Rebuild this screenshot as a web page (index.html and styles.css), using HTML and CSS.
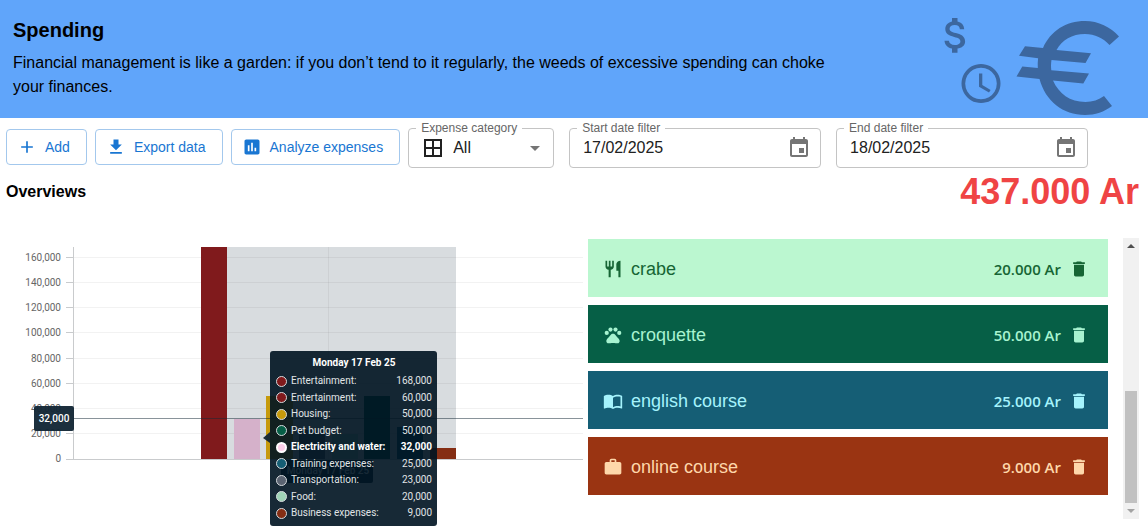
FILE: index.html
```html
<!DOCTYPE html>
<html lang="en">
<head>
<meta charset="utf-8">
<meta name="viewport" content="width=device-width, initial-scale=1">
<title>Spending</title>
<link rel="stylesheet" href="styles.css">
</head>
<body>
<header class="banner">
  <div class="banner-text">
    <h1>Spending</h1>
    <p>Financial management is like a garden: if you don’t tend to it regularly, the weeds of excessive spending can choke your finances.</p>
  </div>
  <svg class="banner-art" viewBox="0 0 188 118" aria-hidden="true">
    <g fill="#3c679f">
      <path d="M0 0h5.500v3.500c4 .8 6.500 3.500 6.700 7.700h-4.300c-.2-2.600-1.900-4.200-5.100-4.200-3.300 0-5.200 1.400-5.200 3.700 0 2.200 1.600 3.200 6.200 4.300 4.700 1.200 9.300 3 9.300 8.400 0 4.200-3.400 6.400-7.600 7.200v4.200H0v-4.200c-3.900-.8-7.300-3.300-7.500-7.800h4.400c.3 2.500 2.300 4.300 6 4.300 4.200 0 5.500-1.900 5.500-3.500 0-2.400-1.400-3.600-6.200-4.700-5.400-1.300-8.900-3.400-8.900-7.900 0-3.900 3-6.600 6.700-7.400z" transform="translate(-8 18)"/>
      <path fill-rule="evenodd" d="M21 64a19.500 19.500 0 1 0 .01 0zM21 67.700a15.800 15.800 0 1 1-.01 0zM19 73.500v13.200l10 5.800 1.600-2.600-8.300-5v-11.400z"/>
      <path fill-rule="evenodd" d="M159 36.500 149.500 45C143 38 135 34 125 34c-13 0-23 6-28.500 16.100L131 53.200l-5.500 9.700L91.500 60c-.6 3.400-.6 7-.2 10.300l37.700 3.100-5.700 10-30.300-2.900C98.700 93.500 110 102 125.500 102c7 0 13.300-2.100 18.500-6l8 10c-7.500 5.800-17 9-27 9-22 0-39.600-14-45.500-36l-23-2.400 5.800-10 15.500 1.300c-.2-3.200-.1-6.400.3-9.600L59 55.700l6-9.400 18 1.600C90.500 31 106 21 125 21c13.500 0 25.500 6 34 15.500z"/>
    </g>
  </svg>
</header>

<main>
  <div class="toolbar">
    <div class="actions">
      <button class="action" type="button">
        <svg class="icon-20" viewBox="0 0 24 24"><path d="M19 13h-6v6h-2v-6H5v-2h6V5h2v6h6z"/></svg>Add
      </button>
      <button class="action" type="button">
        <svg class="icon-20" viewBox="0 0 24 24"><path d="M19 9h-4V3H9v6H5l7 7zM5 18v2h14v-2z"/></svg>Export data
      </button>
      <button class="action" type="button">
        <svg class="icon-20" viewBox="0 0 24 24"><path d="M19 3H5c-1.100 0-2 .9-2 2v14c0 1.100.9 2 2 2h14c1.100 0 2-.9 2-2V5c0-1.100-.9-2-2-2M9 17H7v-7h2zm4 0h-2V7h2zm4 0h-2v-4h2z"/></svg>Analyze expenses
      </button>
    </div>
    <div class="field field-select">
      <label for="category">Expense category</label>
      <svg class="icon-24 dark" viewBox="0 0 24 24"><path d="M3 3v18h18V3zm8 16H5v-6h6zm0-8H5V5h6zm8 8h-6v-6h6zm0-8h-6V5h6z"/></svg>
      <select id="category"><option>All</option></select>
      <svg class="icon-24 gray" viewBox="0 0 24 24"><path d="m7 10 5 5 5-5z"/></svg>
    </div>
    <div class="field field-date">
      <label for="start">Start date filter</label>
      <input id="start" type="text" value="17/02/2025">
      <button type="button" aria-label="Choose start date"><svg class="icon-24 gray" viewBox="0 0 24 24"><path d="M17 12h-5v5h5zM16 1v2H8V1H6v2H5c-1.110 0-1.990.9-1.990 2L3 19c0 1.100.89 2 2 2h14c1.100 0 2-.9 2-2V5c0-1.100-.9-2-2-2h-1V1zm3 18H5V8h14z"/></svg></button>
    </div>
    <div class="field field-date">
      <label for="end">End date filter</label>
      <input id="end" type="text" value="18/02/2025">
      <button type="button" aria-label="Choose end date"><svg class="icon-24 gray" viewBox="0 0 24 24"><path d="M17 12h-5v5h5zM16 1v2H8V1H6v2H5c-1.110 0-1.990.9-1.990 2L3 19c0 1.100.89 2 2 2h14c1.100 0 2-.9 2-2V5c0-1.100-.9-2-2-2h-1V1zm3 18H5V8h14z"/></svg></button>
    </div>
  </div>

  <div class="summary">
    <h2>Overviews</h2>
    <strong class="total">437.000 Ar</strong>
  </div>

  <div class="content">
    <section class="chart" aria-label="Spending by day">
      <svg class="plot" viewBox="0 0 583 250">
        <rect x="201" y="9" width="255" height="212" fill="#d8dcdf"/>
        <g class="grid">
          <path d="M73 19.500H583M73 44.500H583M73 69.500H583M73 94.500H583M73 120.500H583M73 145.500H583M73 170.500H583M73 195.500H583M328.500 9V221"/>
        </g>
        <path class="axis" d="M73.500 9V221M66 221.500H583M66 19.500h7M66 44.500h7M66 69.500h7M66 94.500h7M66 120.500h7M66 145.500h7M66 170.500h7M66 195.500h7"/>
        <g class="ticks">
          <text x="61" y="23">160,000</text>
          <text x="61" y="48">140,000</text>
          <text x="61" y="73">120,000</text>
          <text x="61" y="98">100,000</text>
          <text x="61" y="124">80,000</text>
          <text x="61" y="149">60,000</text>
          <text x="61" y="174">40,000</text>
          <text x="61" y="199">20,000</text>
          <text x="61" y="224">0</text>
        </g>
        <rect x="201" y="9" width="26" height="212" fill="#801a1c"/>
        <rect x="234" y="181" width="26" height="40" fill="#d5b1ca"/>
        <rect x="266" y="158" width="27" height="63" fill="#c69a0c"/>
        <rect x="299" y="192" width="26" height="29" fill="#5b6472"/>
        <rect x="332" y="196" width="26" height="25" fill="#9fd3b6"/>
        <rect x="364" y="158" width="26" height="63" fill="#065f46"/>
        <rect x="397" y="189" width="26" height="32" fill="#155e75"/>
        <rect x="430" y="210" width="26" height="11" fill="#852e14"/>
        <path d="M73 180.500H583" stroke="#132735" stroke-opacity=".5"/>
        <rect class="tag" x="34" y="168" width="40" height="25" rx="2"/>
        <text class="tag-text" x="54" y="184">32,000</text>
        <rect class="tag" x="281" y="222" width="92" height="23" rx="2"/>
        <text class="tag-text" x="328" y="236">Monday 17 Feb 25</text>
        <path class="tag" d="M263 200 270 194v11z"/>
      </svg>
      <div class="tooltip">
        <h3>Monday 17 Feb 25</h3>
        <ul>
          <li><i class="dot c-entertainment"></i>Entertainment:<span>168,000</span></li>
          <li><i class="dot c-entertainment"></i>Entertainment:<span>60,000</span></li>
          <li><i class="dot c-housing"></i>Housing:<span>50,000</span></li>
          <li><i class="dot c-pet"></i>Pet budget:<span>50,000</span></li>
          <li class="active"><i class="dot c-electricity"></i>Electricity and water:<span>32,000</span></li>
          <li><i class="dot c-training"></i>Training expenses:<span>25,000</span></li>
          <li><i class="dot c-transport"></i>Transportation:<span>23,000</span></li>
          <li><i class="dot c-food"></i>Food:<span>20,000</span></li>
          <li><i class="dot c-business"></i>Business expenses:<span>9,000</span></li>
        </ul>
      </div>
    </section>

    <section class="list-pane" aria-label="Expenses">
      <ul class="expenses">
        <li class="expense food">
          <svg class="icon-20" viewBox="0 0 24 24"><path d="M11 9H9V2H7v7H5V2H3v7c0 2.120 1.660 3.840 3.750 3.970V22h2.500v-9.030C11.340 12.840 13 11.120 13 9V2h-2zm5-3v8h2.500v8H21V2c-2.760 0-5 2.240-5 4"/></svg>
          <span class="name">crabe</span><span class="amount">20.000 Ar</span>
          <button type="button" aria-label="Delete crabe"><svg class="icon-20" viewBox="0 0 24 24"><path d="M6 19c0 1.100.9 2 2 2h8c1.100 0 2-.9 2-2V7H6zM19 4h-3.500l-1-1h-5l-1 1H5v2h14z"/></svg></button>
        </li>
        <li class="expense pet">
          <svg class="icon-20" viewBox="0 0 24 24"><circle cx="4.500" cy="9.500" r="2.500"/><circle cx="9" cy="5.500" r="2.500"/><circle cx="15" cy="5.500" r="2.500"/><circle cx="19.500" cy="9.500" r="2.500"/><path d="M17.340 14.860c-.87-1.020-1.600-1.890-2.480-2.910-.46-.54-1.050-1.080-1.750-1.320-.11-.04-.22-.07-.33-.09-.25-.04-.52-.04-.78-.04s-.53 0-.79.050c-.11.020-.22.050-.33.090-.7.240-1.280.78-1.750 1.320-.87 1.020-1.600 1.890-2.480 2.910-1.310 1.310-2.920 2.760-2.620 4.790.29 1.020 1.020 2.030 2.330 2.320.73.150 3.060-.44 5.540-.44h.18c2.480 0 4.810.58 5.540.44 1.310-.29 2.040-1.310 2.330-2.320.31-2.040-1.300-3.490-2.610-4.800"/></svg>
          <span class="name">croquette</span><span class="amount">50.000 Ar</span>
          <button type="button" aria-label="Delete croquette"><svg class="icon-20" viewBox="0 0 24 24"><path d="M6 19c0 1.100.9 2 2 2h8c1.100 0 2-.9 2-2V7H6zM19 4h-3.500l-1-1h-5l-1 1H5v2h14z"/></svg></button>
        </li>
        <li class="expense training">
          <svg class="icon-20" viewBox="0 0 24 24"><path d="M21 5c-1.110-.35-2.330-.5-3.500-.5-1.950 0-4.050.4-5.500 1.500-1.450-1.100-3.550-1.500-5.500-1.500S2.450 4.900 1 6v14.650c0 .25.250.5.500.5.100 0 .15-.05.250-.05C3.100 20.450 5.050 20 6.500 20c1.950 0 4.050.4 5.500 1.500 1.350-.85 3.800-1.500 5.500-1.500 1.650 0 3.350.3 4.750 1.050.1.050.15.050.250.050.250 0 .5-.25.500-.5V6c-.6-.45-1.250-.75-2-1m0 13.500c-1.100-.35-2.300-.5-3.500-.5-1.700 0-4.150.65-5.500 1.500V8c1.350-.85 3.800-1.500 5.500-1.500 1.200 0 2.400.150 3.500.5z"/></svg>
          <span class="name">english course</span><span class="amount">25.000 Ar</span>
          <button type="button" aria-label="Delete english course"><svg class="icon-20" viewBox="0 0 24 24"><path d="M6 19c0 1.100.9 2 2 2h8c1.100 0 2-.9 2-2V7H6zM19 4h-3.500l-1-1h-5l-1 1H5v2h14z"/></svg></button>
        </li>
        <li class="expense business">
          <svg class="icon-20" viewBox="0 0 24 24"><path d="M20 6h-4V4c0-1.110-.89-2-2-2h-4c-1.110 0-2 .89-2 2v2H4c-1.110 0-1.990.89-1.990 2L2 19c0 1.110.89 2 2 2h16c1.110 0 2-.89 2-2V8c0-1.110-.89-2-2-2m-6 0h-4V4h4z"/></svg>
          <span class="name">online course</span><span class="amount">9.000 Ar</span>
          <button type="button" aria-label="Delete online course"><svg class="icon-20" viewBox="0 0 24 24"><path d="M6 19c0 1.100.9 2 2 2h8c1.100 0 2-.9 2-2V7H6zM19 4h-3.500l-1-1h-5l-1 1H5v2h14z"/></svg></button>
        </li>
      </ul>
      <div class="scrollbar" aria-hidden="true">
        <span class="arrow up"></span>
        <span class="thumb"></span>
        <span class="arrow down"></span>
      </div>
    </section>
  </div>
</main>
</body>
</html>
```

FILE: styles.css
```css
* { box-sizing: border-box; }

body {
  margin: 0;
  background: #fff;
  color: #000;
  font: 16px/24px "Liberation Sans", Arial, sans-serif;
}
main { padding-bottom: 12px; }

h1, h2, h3, p, ul { margin: 0; padding: 0; }
ul { list-style: none; }
button { font: inherit; cursor: pointer; }
svg { display: block; flex: none; fill: currentColor; }

.icon-20 { width: 20px; height: 20px; }
.icon-24 { width: 24px; height: 24px; }
.dark { color: #212121; }
.gray { color: #757575; }

/* Banner */
.banner {
  display: flex;
  justify-content: space-between;
  height: 118px;
  background: #60a5fa;
}
.banner-text { max-width: 848px; padding: 16px 13px; }
.banner h1 { font-size: 20px; line-height: 28px; margin-bottom: 7px; }
.banner-art { width: 188px; height: 118px; overflow: visible; }

/* Toolbar */
.toolbar {
  display: flex;
  align-items: flex-start;
  gap: 15px;
  padding: 10px 60px 0 6px;
}
.actions { display: flex; gap: 8px; margin-right: -7px; padding-top: 1px; }
.action {
  display: flex;
  align-items: center;
  gap: 8px;
  height: 36px;
  padding: 0 16px 0 10px;
  border: 1px solid #a3c8ed;
  border-radius: 4px;
  background: #fff;
  color: #1976d2;
  font-size: 14px;
  white-space: nowrap;
}
.field {
  position: relative;
  display: flex;
  align-items: center;
  min-width: 0;
  height: 40px;
  border: 1px solid #c4c4c4;
  border-radius: 4px;
}
.field label {
  position: absolute;
  top: -9px;
  left: 7px;
  padding: 0 5px;
  background: #fff;
  color: #666;
  font-size: 12px;
  line-height: 16px;
  white-space: nowrap;
}
.field-select { flex: 0 0 146px; padding: 0 6px 0 12px; }
.field-date { flex: 0 1 252px; padding: 0 9px 0 13px; }
.field select, .field input {
  flex: 1;
  width: 100%;
  min-width: 0;
  padding: 0;
  border: 0;
  outline: 0;
  background: none;
  color: #212121;
  font: inherit;
  appearance: none;
}
.field select { padding-left: 8px; }
.field button { padding: 0; border: 0; background: none; }

/* Summary */
.summary {
  display: flex;
  justify-content: space-between;
  align-items: center;
  padding: 4px 9px 26px 6px;
}
.summary h2 { font-size: 16px; line-height: 24px; }
.total { color: #ef4444; font-size: 36px; line-height: 40px; }

/* Chart */
.content {
  display: grid;
  grid-template-columns: minmax(0, 583fr) minmax(0, 551fr);
  gap: 5px;
  padding-right: 9px;
}
.chart { position: relative; font-family: Roboto, sans-serif; font-size: 10px; }
.plot { width: 100%; }
.grid path { fill: none; stroke: #000; stroke-opacity: .05; }
.axis { fill: none; stroke: #c9cbcd; }
.ticks { fill: #666; text-anchor: end; }
.tag { fill: #132735; fill-opacity: .96; }
.tag-text { fill: #fff; font-weight: 500; text-anchor: middle; }
.tooltip {
  position: absolute;
  top: 113px;
  left: 270px;
  display: flex;
  flex-direction: column;
  width: 167px;
  height: 175px;
  padding: 4px 5px 5px 6px;
  border-radius: 3px;
  background: rgba(0, 20, 34, .91);
  color: #e0e4e6;
  line-height: 16px;
}
.tooltip h3 { color: #fff; font-size: 10px; text-align: center; margin-bottom: 2px; }
.tooltip ul { flex: 1; display: flex; flex-direction: column; justify-content: space-between; }
.tooltip li { display: flex; align-items: center; gap: 4px; }
.tooltip span { margin-left: auto; }
.tooltip .active { color: #fff; font-weight: 700; }
.dot { width: 11px; height: 11px; border: 1px solid #d6dadd; border-radius: 50%; }
.active .dot { border: 2px solid #fff; }
.c-entertainment { background: #801a1c; }
.c-housing { background: #c69a0c; }
.c-pet { background: #065f46; }
.c-electricity { background: #fbcfe8; }
.c-training { background: #155e75; }
.c-transport { background: #5b6472; }
.c-food { background: #9fd3b6; }
.c-business { background: #852e14; }

/* Expense list */
.list-pane { display: flex; gap: 15px; height: 281px; }
.expenses { flex: 1; display: flex; flex-direction: column; gap: 8px; padding-top: 1px; }
.expense {
  display: flex;
  align-items: center;
  height: 58px;
  padding: 2px 19px 0 15px;
}
.expense .name { margin-left: 8px; font-size: 18px; }
.expense .amount {
  margin-left: auto;
  font: 600 15px/24px "Open Sans", "Noto Sans", sans-serif;
}
.expense button { margin-left: 8px; padding: 0; border: 0; background: none; color: inherit; }
.food { background: #bbf7d0; color: #166534; }
.pet { background: #065f46; color: #a7f3d0; }
.training { background: #155e75; color: #a5f3fc; }
.business { background: #9a3412; color: #fed7aa; }

.scrollbar {
  display: flex;
  flex-direction: column;
  align-items: center;
  width: 16px;
  padding: 6px 0;
  background: #f1f1f1;
}
.thumb { width: 12px; height: 112px; margin: auto 0 6px; background: #c1c1c1; }
.arrow { border: 4px solid transparent; }
.up { border-top: 0; border-bottom-color: #505050; }
.down { border-bottom: 0; border-top-color: #a3a3a3; }
```
